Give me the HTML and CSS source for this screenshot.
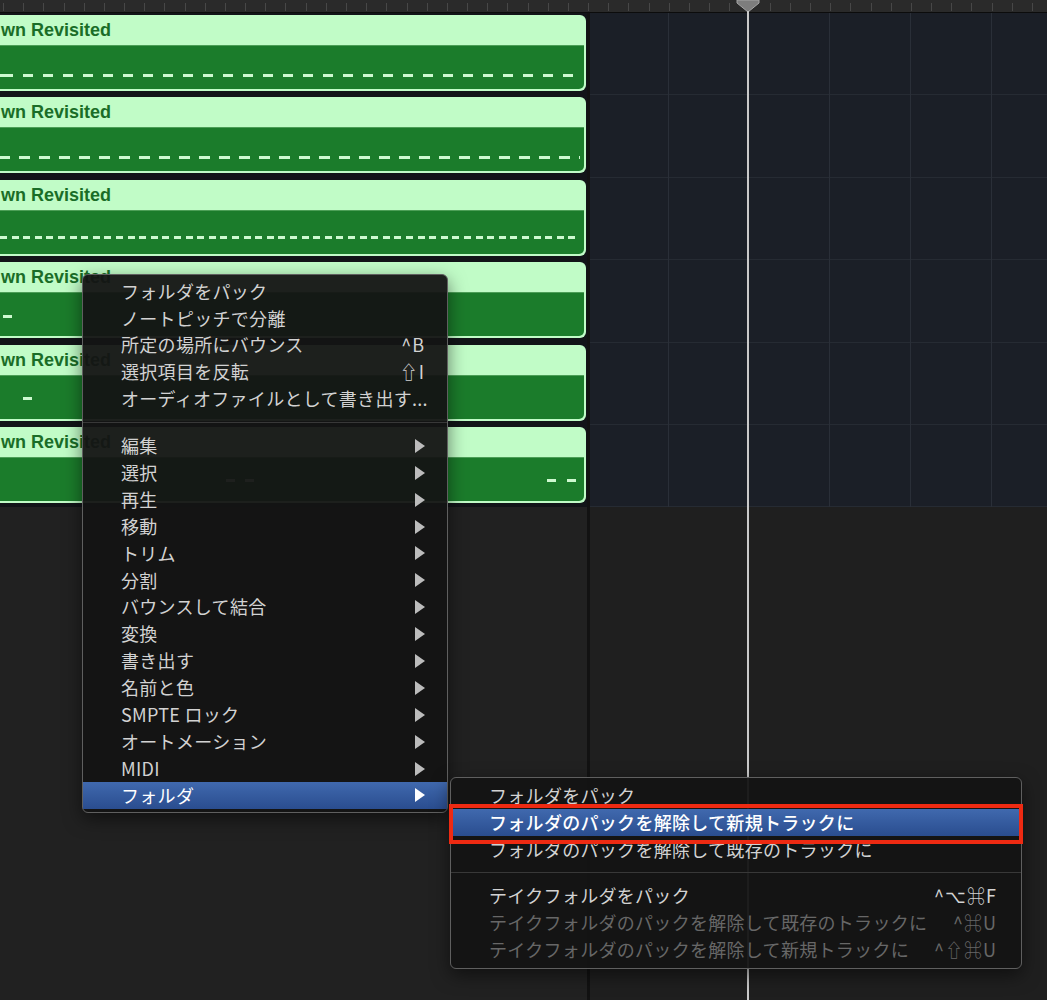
FILE: index.html
```html
<!DOCTYPE html>
<html lang="ja">
<head>
    <meta charset="UTF-8">
    <title>Folder Context Menu</title>
    <link rel="stylesheet" href="styles.css">
</head>
<body>
    <div class="daw">
        <div class="ruler"></div>
        <div class="main">
            <div class="regions-col">
                <div class="tracks">
                    <div class="track">
                        <div class="region">
                            <div class="region-head">wn Revisited</div>
                            <div class="region-body"><div class="notes notes-a"></div></div>
                        </div>
                    </div>
                    <div class="track">
                        <div class="region">
                            <div class="region-head">wn Revisited</div>
                            <div class="region-body"><div class="notes notes-b"></div></div>
                        </div>
                    </div>
                    <div class="track">
                        <div class="region">
                            <div class="region-head">wn Revisited</div>
                            <div class="region-body"><div class="notes notes-c"></div></div>
                        </div>
                    </div>
                    <div class="track">
                        <div class="region">
                            <div class="region-head">wn Revisited</div>
                            <div class="region-body">
                                <div class="notes notes-d">
                                    <span class="note" style="left:13px;width:9px"></span>
                                </div>
                            </div>
                        </div>
                    </div>
                    <div class="track">
                        <div class="region">
                            <div class="region-head">wn Revisited</div>
                            <div class="region-body">
                                <div class="notes notes-e">
                                    <span class="note" style="left:33px;width:9px"></span>
                                </div>
                            </div>
                        </div>
                    </div>
                    <div class="track">
                        <div class="region">
                            <div class="region-head">wn Revisited</div>
                            <div class="region-body">
                                <div class="notes notes-f">
                                    <span class="note" style="left:236px;width:9px"></span>
                                    <span class="note" style="left:255px;width:9px"></span>
                                    <span class="note" style="left:557px;width:9px"></span>
                                    <span class="note" style="left:577px;width:9px"></span>
                                </div>
                            </div>
                        </div>
                    </div>
                </div>
            </div>
            <div class="grid-col">
                <div class="grid"></div>
            </div>
        </div>

        <div class="playhead">
            <svg width="24" height="13" viewBox="0 0 24 13">
                <polygon points="1,0 23,0 23,3 12,12 1,3" fill="#7d7d7d" stroke="#a5a5a5" stroke-width="1"/>
            </svg>
        </div>

        <div class="menu context">
            <div class="item"><span>フォルダをパック</span></div>
            <div class="item"><span>ノートピッチで分離</span></div>
            <div class="item"><span>所定の場所にバウンス</span><span class="key">^B</span></div>
            <div class="item"><span>選択項目を反転</span><span class="key">⇧I</span></div>
            <div class="item"><span>オーディオファイルとして書き出す...</span></div>
            <div class="sep"></div>
            <div class="item"><span>編集</span><span class="arrow"></span></div>
            <div class="item"><span>選択</span><span class="arrow"></span></div>
            <div class="item"><span>再生</span><span class="arrow"></span></div>
            <div class="item"><span>移動</span><span class="arrow"></span></div>
            <div class="item"><span>トリム</span><span class="arrow"></span></div>
            <div class="item"><span>分割</span><span class="arrow"></span></div>
            <div class="item"><span>バウンスして結合</span><span class="arrow"></span></div>
            <div class="item"><span>変換</span><span class="arrow"></span></div>
            <div class="item"><span>書き出す</span><span class="arrow"></span></div>
            <div class="item"><span>名前と色</span><span class="arrow"></span></div>
            <div class="item"><span>SMPTE ロック</span><span class="arrow"></span></div>
            <div class="item"><span>オートメーション</span><span class="arrow"></span></div>
            <div class="item"><span>MIDI</span><span class="arrow"></span></div>
            <div class="item active"><span>フォルダ</span><span class="arrow"></span></div>
        </div>

        <div class="menu submenu">
            <div class="item"><span>フォルダをパック</span></div>
            <div class="item active"><span>フォルダのパックを解除して新規トラックに</span></div>
            <div class="item"><span>フォルダのパックを解除して既存のトラックに</span></div>
            <div class="sep"></div>
            <div class="item"><span>テイクフォルダをパック</span><span class="key">^⌥⌘F</span></div>
            <div class="item dim"><span>テイクフォルダのパックを解除して既存のトラックに</span><span class="key">^⌘U</span></div>
            <div class="item dim"><span>テイクフォルダのパックを解除して新規トラックに</span><span class="key">^⇧⌘U</span></div>
        </div>

        <div class="callout"></div>
    </div>
</body>
</html>
```

FILE: styles.css
```css
body, html {
    margin: 0;
    padding: 0;
    background: #1f1f1f;
    overflow: hidden;
    font-family: "Noto Sans CJK JP", sans-serif;
}
.daw {
    position: relative;
    width: 1047px;
    height: 1000px;
    display: flex;
    flex-direction: column;
    overflow: hidden;
}
.ruler {
    height: 12px;
    flex: none;
    background-color: #2a2a2a;
    background-image: repeating-linear-gradient(90deg, #474747 0 1px, transparent 1px 20.175px);
    background-size: 100% 8px;
    background-position: 2.5px 3px;
    background-repeat: no-repeat;
    border-bottom: 1px solid #0c0c0c;
}
.main {
    flex: 1;
    display: flex;
}
.regions-col {
    width: 587px;
    flex: none;
    background: #212121;
    border-right: 3px solid #121212;
}
.tracks {
    background: #121418;
}
.track {
    height: 82.4px;
    padding-top: 2px;
    box-sizing: border-box;
}
.region {
    height: 76px;
    margin: 0 1px 0 -10px;
    padding: 0 2px 2px 0;
    box-sizing: border-box;
    background: #c1fcc7;
    border-radius: 6px;
    display: flex;
    flex-direction: column;
}
.region-head {
    height: 30px;
    line-height: 31px;
    padding-left: 11px;
    font-family: "Liberation Sans", Arial, sans-serif;
    font-weight: bold;
    font-size: 18px;
    color: #1a6d27;
    white-space: nowrap;
}
.region-body {
    flex: 1;
    position: relative;
    background: #1b7c2b;
    border-top: 1px solid #4c9f57;
    border-radius: 0 0 5px 5px;
}
.notes {
    position: absolute;
    left: 0;
    right: 4px;
    height: 3px;
}
.notes-a {
    top: 28px;
    background: repeating-linear-gradient(90deg, #cdf9d0 0 10px, transparent 10px 20px);
    background-position: 13px 0;
}
.notes-b {
    top: 28px;
    background: repeating-linear-gradient(90deg, #cdf9d0 0 11px, transparent 11px 20px);
    background-position: 9px 0;
}
.notes-c {
    top: 25px;
    background: repeating-linear-gradient(90deg, #cdf9d0 0 7px, transparent 7px 11.6px);
    background-position: 10px 0;
}
.notes-d { top: 22px; }
.notes-e { top: 21px; }
.notes-f { top: 21px; }
.note {
    position: absolute;
    top: 0;
    height: 3px;
    background: #cdf9d0;
}
.grid-col {
    flex: 1;
}
.grid {
    height: 494.4px;
    background-color: #1b1f27;
    background-image:
        repeating-linear-gradient(90deg, transparent 0 77.7px, #2a2f38 77.7px 78.7px, transparent 78.7px 80.7px),
        repeating-linear-gradient(180deg, transparent 0 81.4px, #262b33 81.4px 82.4px);
}
.playhead {
    position: absolute;
    left: 736px;
    top: 0;
    bottom: 0;
    width: 24px;
}
.playhead svg {
    display: block;
}
.playhead::after {
    content: "";
    position: absolute;
    left: 11px;
    top: 11px;
    bottom: 0;
    width: 2px;
    background: #c9c9c9;
}
.menu {
    position: absolute;
    box-sizing: border-box;
    background: rgba(20, 20, 20, 0.95);
    border: 1px solid #5f5f5f;
    border-radius: 6px;
    box-shadow: 0 6px 18px rgba(0, 0, 0, 0.5);
    font-size: 18px;
    color: #d2d2d2;
}
.context {
    left: 82px;
    top: 274px;
    width: 366px;
    padding: 3px 0;
}
.submenu {
    left: 450px;
    top: 777px;
    width: 572px;
    padding: 4px 0 5px;
}
.item {
    height: 26.9px;
    display: flex;
    align-items: center;
    justify-content: space-between;
    padding: 0 22px 0 38px;
    line-height: 1.2;
    letter-spacing: 0.3px;
    white-space: nowrap;
}
.submenu .item {
    height: 27px;
    padding: 0 24px 0 38px;
}
.item.active {
    background: linear-gradient(#4069ae, #2a4d8f);
    color: #fff;
}
.submenu .item.active {
    font-weight: 500;
}
.item.dim {
    color: #676767;
}
.key {
    letter-spacing: 1px;
}
.arrow {
    width: 0;
    height: 0;
    border-left: 10px solid #bcbcbc;
    border-top: 7px solid transparent;
    border-bottom: 7px solid transparent;
}
.active .arrow {
    border-left-color: #fff;
}
.sep {
    height: 20px;
    display: flex;
    align-items: center;
}
.submenu .sep {
    height: 19px;
}
.sep::before {
    content: "";
    flex: 1;
    height: 1px;
    background: #383838;
}
.callout {
    position: absolute;
    left: 449px;
    top: 804px;
    width: 574px;
    height: 40px;
    box-sizing: border-box;
    border: 4px solid #ee2a12;
}
```
